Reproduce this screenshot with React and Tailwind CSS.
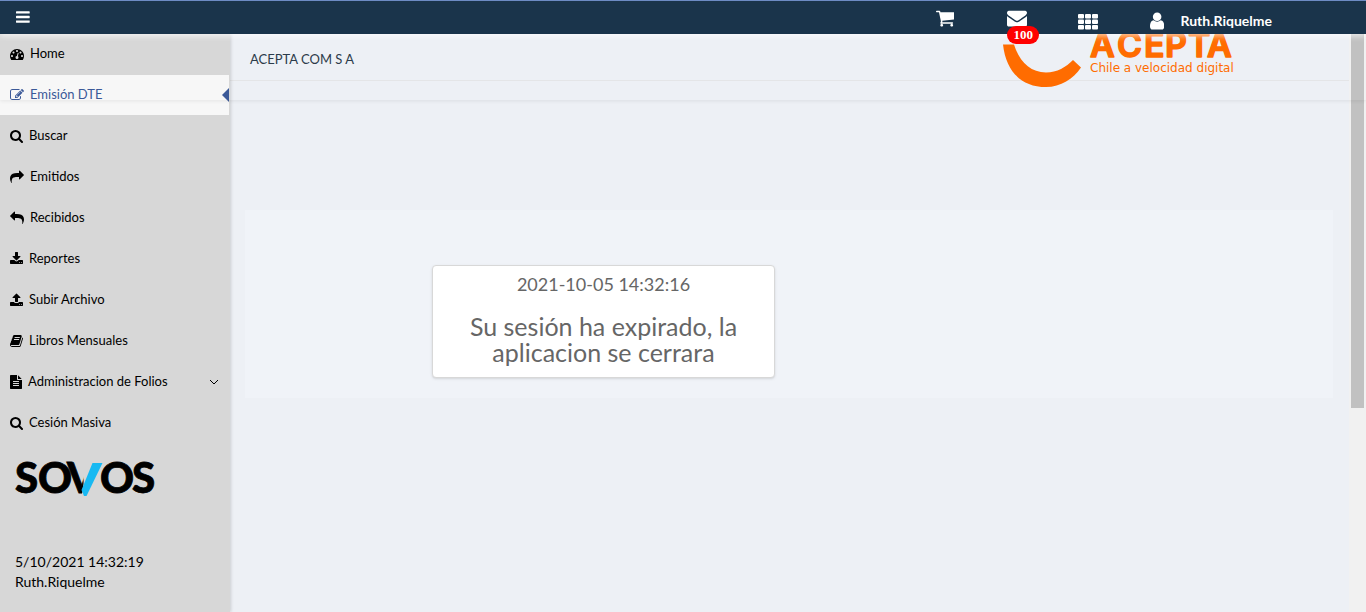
const icons = {
  bars: [1536, "M1536 1344v128q0 26-19 45t-45 19h-1408q-26 0-45-19t-19-45v-128q0-26 19-45t45-19h1408q26 0 45 19t19 45zm0-512v128q0 26-19 45t-45 19h-1408q-26 0-45-19t-19-45v-128q0-26 19-45t45-19h1408q26 0 45 19t19 45zm0-512v128q0 26-19 45t-45 19h-1408q-26 0-45-19t-19-45v-128q0-26 19-45t45-19h1408q26 0 45 19t19 45z"],
  dashboard: [1792, "M384 1152q0-53-37.5-90.5t-90.5-37.5-90.5 37.5-37.5 90.5 37.5 90.5 90.5 37.5 90.5-37.5 37.5-90.5zm192-448q0-53-37.5-90.5t-90.5-37.5-90.5 37.5-37.5 90.5 37.5 90.5 90.5 37.5 90.5-37.5 37.5-90.5zm428 481l101-382q6-26-7.5-48.5t-38.5-29.5-48 6.5-30 39.5l-101 382q-60 5-107 43.5t-63 98.5q-20 77 20 146t117 89 146-20 89-117q16-60-6-117t-72-91zm660-33q0-53-37.5-90.5t-90.5-37.5-90.5 37.5-37.5 90.5 37.5 90.5 90.5 37.5 90.5-37.5 37.5-90.5zm-640-640q0-53-37.5-90.5t-90.5-37.5-90.5 37.5-37.5 90.5 37.5 90.5 90.5 37.5 90.5-37.5 37.5-90.5zm448 192q0-53-37.5-90.5t-90.5-37.5-90.5 37.5-37.5 90.5 37.5 90.5 90.5 37.5 90.5-37.5 37.5-90.5zm320 448q0 261-141 483-19 29-54 29h-1402q-35 0-54-29-141-221-141-483 0-182 71-348t191-286 286-191 348-71 348 71 286 191 191 286 71 348z"],
  edit: [1792, "M888 1184l116-116-152-152-116 116v56h96v96h56zm440-720q-16-16-33 1l-350 350q-17 17-1 33t33-1l350-350q17-17 1-33zm80 594v190q0 119-84.5 203.5t-203.5 84.5h-832q-119 0-203.5-84.5t-84.5-203.5v-832q0-119 84.5-203.5t203.5-84.5h832q63 0 117 25 15 7 18 23 3 17-9 29l-49 49q-14 14-32 8-23-6-45-6h-832q-66 0-113 47t-47 113v832q0 66 47 113t113 47h832q66 0 113-47t47-113v-126q0-13 9-22l64-64q15-15 35-7t20 29zm-96-738l288 288-672 672h-288v-288zm444 132l-92 92-288-288 92-92q28-28 68-28t68 28l152 152q28 28 28 68t-28 68z"],
  search: [1664, "M1152 832q0-185-131.5-316.5t-316.5-131.5-316.5 131.5-131.5 316.5 131.5 316.5 316.5 131.5 316.5-131.5 131.5-316.5zm512 832q0 52-38 90t-90 38q-54 0-90-38l-343-342q-179 124-399 124-143 0-273.5-55.5t-225-150-150-225-55.5-273.5 55.5-273.5 150-225 225-150 273.5-55.5 273.5 55.5 225 150 150 225 55.5 273.5q0 220-124 399l343 343q37 37 37 90z"],
  share: [1792, "M1792 640q0 26-19 45l-512 512q-19 19-45 19t-45-19-19-45v-256h-224q-98 0-175.5 6t-154 21.5-133 42.5-105.5 69.5-80 101-48.5 138.5-17.5 181q0 55 5 123 0 6 2.5 23.5t2.5 26.5q0 15-8.5 25t-23.5 10q-16 0-28-17-7-9-13-22t-13.5-30-10.5-24q-127-285-127-451 0-199 53-333 162-403 875-403h224v-256q0-26 19-45t45-19 45 19l512 512q19 19 19 45z"],
  download: [1664, "M1280 1344q0-26-19-45t-45-19-45 19-19 45 19 45 45 19 45-19 19-45zm256 0q0-26-19-45t-45-19-45 19-19 45 19 45 45 19 45-19 19-45zm128-224v320q0 40-28 68t-68 28h-1472q-40 0-68-28t-28-68v-320q0-40 28-68t68-28h465l135 136q58 56 136 56t136-56l136-136h464q40 0 68 28t28 68zm-325-569q17 41-14 70l-448 448q-18 19-45 19t-45-19l-448-448q-31-29-14-70 17-39 59-39h256v-448q0-26 19-45t45-19h256q26 0 45 19t19 45v448h256q42 0 59 39z"],
  upload: [1664, "M1280 1472q0-26-19-45t-45-19-45 19-19 45 19 45 45 19 45-19 19-45zm256 0q0-26-19-45t-45-19-45 19-19 45 19 45 45 19 45-19 19-45zm128-224v320q0 40-28 68t-68 28h-1472q-40 0-68-28t-28-68v-320q0-40 28-68t68-28h427q21 56 70.5 92t110.5 36h256q61 0 110.5-36t70.5-92h427q40 0 68 28t28 68zm-325-648q-17 40-59 40h-256v448q0 26-19 45t-45 19h-256q-26 0-45-19t-19-45v-448h-256q-42 0-59-40-17-39 14-69l448-448q18-19 45-19t45 19l448 448q31 30 14 69z"],
  book: [1664, "M1639 478q40 57 18 129l-275 906q-19 64-76.5 107.5t-122.5 43.5h-923q-77 0-148.5-53.5t-99.5-131.5q-24-67-2-127 0-4 3-27t4-37q1-8-3-21.5t-3-19.5q2-11 8-21t16.5-23.5 16.5-23.5q23-38 45-91.5t30-91.5q3-10 .5-30t-.5-28q3-11 17-28t17-23q21-36 42-92t25-90q1-9-2.5-32t.5-28q4-13 22-30.5t22-22.5q19-26 42.5-84.5t27.5-96.5q1-8-3-25.5t-2-26.5q2-8 9-18t18-23 17-21q8-12 16.5-30.5t15-35 16-36 19.5-32 26.5-23.5 36-11.5 47.5 5.5l-1 3q38-9 51-9h761q74 0 114 56t18 130l-274 906q-36 119-71.5 153.5t-128.5 34.5h-869q-27 0-38 15-11 16-1 43 24 70 144 70h923q29 0 56-15.5t35-41.5l300-987q7-22 5-57 38 15 59 43zm-1064 2q-4 13 2 22.5t20 9.5h608q13 0 25.5-9.5t16.5-22.5l21-64q4-13-2-22.5t-20-9.5h-608q-13 0-25.5 9.5t-16.5 22.5zm-83 256q-4 13 2 22.5t20 9.5h608q13 0 25.5-9.5t16.5-22.5l21-64q4-13-2-22.5t-20-9.5h-608q-13 0-25.5 9.5t-16.5 22.5z"],
  file: [1536, "M1468 476q14 14 28 36h-472v-472q22 14 36 28zm-476 164h544v1056q0 40-28 68t-68 28h-1344q-40 0-68-28t-28-68v-1600q0-40 28-68t68-28h800v544q0 40 28 68t68 28zm160 736v-64q0-14-9-23t-23-9h-704q-14 0-23 9t-9 23v64q0 14 9 23t23 9h704q14 0 23-9t9-23zm0-256v-64q0-14-9-23t-23-9h-704q-14 0-23 9t-9 23v64q0 14 9 23t23 9h704q14 0 23-9t9-23zm0-256v-64q0-14-9-23t-23-9h-704q-14 0-23 9t-9 23v64q0 14 9 23t23 9h704q14 0 23-9t9-23z"],
  cart: [1664, "M640 1536q0 52-38 90t-90 38-90-38-38-90 38-90 90-38 90 38 38 90zm896 0q0 52-38 90t-90 38-90-38-38-90 38-90 90-38 90 38 38 90zm128-1088v512q0 24-16.5 42.5t-40.5 21.5l-1044 122q13 60 13 70 0 16-24 64h920q26 0 45 19t19 45-19 45-45 19h-1024q-26 0-45-19t-19-45q0-11 8-31.5t16-36 21.5-40 15.5-29.5l-177-823h-204q-26 0-45-19t-19-45 19-45 45-19h256q16 0 28.5 6.5t19.5 15.5 13 24.5 8 26 5.5 29.5 4.5 26h1201q26 0 45 19t19 45z"],
  envelope: [1792, "M1792 710v794q0 66-47 113t-113 47h-1472q-66 0-113-47t-47-113v-794q44 49 101 87 362 246 497 345 57 42 92.5 65.5t94.5 48 110 24.5h2q51 0 110-24.5t94.5-48 92.5-65.5q170-123 498-345 57-39 100-87zm0-294q0 79-49 151t-122 123q-376 261-468 325-10 7-42.5 31t-54 38.5-52 32.5-57.5 27-50 9h-2q-23 0-50-9t-57.5-27-52-32.5-54-38.5-42.5-31q-91-64-262-182.5t-205-142.5q-62-42-117-115.5t-55-136.5q0-78 41.5-130t118.5-52h1472q65 0 112.5 47t47.5 113z"],
  user: [1280, "M1280 1399q0 109-62.5 187t-150.5 78h-854q-88 0-150.5-78t-62.5-187q0-85 8.5-160.5t31.5-152 58.5-131 94-89 134.5-34.5q131 128 313 128t313-128q76 0 134.5 34.5t94 89 58.5 131 31.5 152 8.5 160.5zm-256-887q0 159-112.5 271.5t-271.5 112.5-271.5-112.5-112.5-271.5 112.5-271.5 271.5-112.5 271.5 112.5 112.5 271.5z"],
};

function Icon({ name, className = "h-[14px]" }) {
  const [width, d] = icons[name];
  return (
    <svg viewBox={`0 0 ${width} 1792`} className={`${className} w-auto shrink-0`} fill="currentColor" aria-hidden="true">
      <path d={d} />
    </svg>
  );
}

function GridIcon() {
  return (
    <svg viewBox="0 0 20 16" className="h-4 w-5" fill="currentColor" aria-hidden="true">
      {[0, 5.5, 11].flatMap((y) =>
        [0, 7, 14].map((x) => <rect key={`${x}-${y}`} x={x} y={y} width="6" height="4.4" rx="1" />)
      )}
    </svg>
  );
}

const menu = [
  { label: "Home", icon: "dashboard" },
  { label: "Emisión DTE", icon: "edit", active: true },
  { label: "Buscar", icon: "search" },
  { label: "Emitidos", icon: "share" },
  { label: "Recibidos", icon: "share", mirrored: true },
  { label: "Reportes", icon: "download" },
  { label: "Subir Archivo", icon: "upload" },
  { label: "Libros Mensuales", icon: "book" },
  { label: "Administracion de Folios", icon: "file", expandable: true },
  { label: "Cesión Masiva", icon: "search" },
];

function MenuItem({ item }) {
  return (
    <li className="pb-px">
      <a
        href="#"
        className={`relative mr-px flex h-10 items-center gap-1.5 px-2.5 text-[13px] ${
          item.active ? "bg-[#f7f7f7] text-[#3b5998]" : "text-black"
        }`}
      >
        <Icon name={item.icon} className={item.mirrored ? "h-[14px] -scale-x-100" : "h-[14px]"} />
        <span>{item.label}</span>
        {item.expandable && (
          <svg viewBox="0 0 10 6" className="ml-auto h-1.5 w-2.5" fill="none" stroke="currentColor" aria-hidden="true">
            <path d="M1 1l4 4 4-4" />
          </svg>
        )}
        {item.active && (
          <svg viewBox="0 0 7 14" className="absolute right-0 h-3.5 w-[7px]" fill="#3b5998" aria-hidden="true">
            <path d="M7 0v14L0 7z" />
          </svg>
        )}
      </a>
    </li>
  );
}

function SovosLogo() {
  return (
    <svg viewBox="0 0 142 52" className="h-[52px] w-[142px] overflow-visible" role="img" aria-label="SOVOS">
      <clipPath id="sovos-letters">
        <path d="M-4 -10H68.500V24L66 40H-4zM84 -10H150V50H84z" />
      </clipPath>
      <text
        x="0 23 52 85 117"
        y="33"
        fontFamily="Lato, sans-serif"
        fontWeight="900"
        fontSize="42"
        stroke="#000"
        strokeWidth="0.8"
        clipPath="url(#sovos-letters)"
      >
        SOVOS
      </text>
      <path d="M77.500 3H87.500L71.500 36H69L66.500 30z" fill="#18b9f2" />
    </svg>
  );
}

function AceptaLogo() {
  return (
    <svg viewBox="0 0 236 56" className="h-14 w-[236px] overflow-visible" role="img" aria-label="ACEPTA Chile a velocidad digital">
      <path d="M0 10.500L11 10.500C16 27 27 38.500 43 38.500C54 38.500 63 33 70 26L78 33.500C70 45 58 53 43 53C18 53 3 37 0 10.500z" fill="#ff6c00" />
      <g fill="#ff6c00">
        <text
          x="87 114 141 162 185 204"
          y="23"
          fontFamily="Inter, sans-serif"
          fontWeight="600"
          fontSize="34"
          stroke="#ff6c00"
          strokeWidth="1.500"
          strokeLinejoin="round"
        >
          ACEPTA
        </text>
        <text x="87" y="38" fontFamily="DejaVu Sans, sans-serif" fontSize="12">
          Chile a velocidad digital
        </text>
      </g>
    </svg>
  );
}

export default function App() {
  return (
    <div className="relative flex min-h-screen flex-col bg-[#edf0f5] font-['Lato',sans-serif] text-black">
      <header className="relative z-20 flex h-[34px] items-center justify-between border-t border-[#6d8bc4] bg-[#1a344b] px-4 text-white shadow-[0_2px_6px_rgba(255,255,255,0.7)]">
        <button type="button" aria-label="Menú" className="flex pb-0.5">
          <Icon name="bars" className="h-4" />
        </button>
        <div className="mr-[78px] flex items-center">
          <button type="button" aria-label="Carrito" className="mr-[53px] flex">
            <Icon name="cart" className="h-5" />
          </button>
          <button type="button" aria-label="Mensajes" className="relative mr-[51px] flex">
            <Icon name="envelope" className="h-5" />
            <span className="absolute top-[18px] left-0 flex h-[18px] w-8 items-center justify-center rounded-full bg-[#ff0000] font-['Liberation_Serif',serif] text-[13px] font-bold">
              100
            </span>
          </button>
          <button type="button" aria-label="Aplicaciones" className="mr-[52px] flex pt-2">
            <GridIcon />
          </button>
          <button type="button" className="flex items-center gap-4 pt-1.5 text-sm font-bold">
            <Icon name="user" className="h-5" />
            Ruth.Riquelme
          </button>
        </div>
      </header>

      <div className="flex flex-1">
        <aside className="z-10 flex w-[230px] shrink-0 flex-col bg-[#d7d7d7] shadow-[1px_0_3px_rgba(0,0,0,0.15)]">
          <nav>
            <ul>
              {menu.map((item) => (
                <MenuItem key={item.label} item={item} />
              ))}
            </ul>
          </nav>
          <div className="px-[15px] pt-4">
            <SovosLogo />
            <p className="pt-10 text-sm leading-5">
              5/10/2021 14:32:19
              <br />
              Ruth.Riquelme
            </p>
          </div>
        </aside>

        <main className="relative min-w-0 flex-1">
          <div className="flex h-[47px] items-center border-b border-[#e4e5e7] pt-1.5 pl-5">
            <h1 className="text-[13px] text-[#2c3b4a]">ACEPTA COM S A</h1>
          </div>
          <div className="absolute top-0 right-[110px]">
            <AceptaLogo />
          </div>
          <section className="mt-[129px] mr-4 ml-[15px] bg-[#f0f3f8] pt-[55px] pb-5">
            <div className="ml-[187px] w-[343px] rounded border border-[#d8d8d8] bg-white px-4 pt-1.5 pb-3 text-center text-[#666] shadow-sm">
              <p className="text-lg leading-6">2021-10-05 14:32:16</p>
              <h2 className="mt-[17px] text-[25px] leading-[26px]">
                Su sesión ha expirado, la aplicacion se cerrara
              </h2>
            </div>
          </section>
        </main>

        <div className="w-[17px] shrink-0 bg-[#f1f1f1] px-0.5" aria-hidden="true">
          <div className="h-[374px] bg-[#c1c1c1]" />
        </div>
      </div>
      <div className="pointer-events-none absolute inset-x-0 top-0 z-10 h-[100px] shadow-[0_1px_4px_rgba(0,0,0,0.08)]" />
    </div>
  );
}
